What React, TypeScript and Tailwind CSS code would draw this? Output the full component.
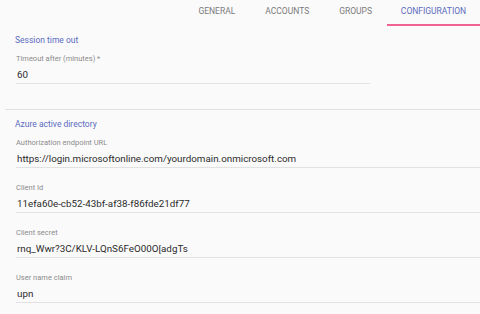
import React from "react";

const font = { fontFamily: "Roboto, 'Liberation Sans', sans-serif" };

function Field({ label, value, first, widthClass }: { label: string; value: string; first?: boolean; widthClass: string }) {
  return (
    <div className={`${first ? "mt-[8px]" : "mt-[15px]"} ${widthClass} ml-[1px] border-b border-[#e2e2e2]`}>
      <div className="h-[10px] text-[7.5px] leading-[10px] text-[#8c8c8c]">{label}</div>
      <div className="pt-[4px] pb-[1px] text-[9.8px] leading-[14px] text-[#2b2b2b] pl-[1px]">{value}</div>
    </div>
  );
}

export default function App() {
  const tabs = ["GENERAL", "ACCOUNTS", "GROUPS", "CONFIGURATION"];
  return (
    <div className="w-[480px] h-[314px] bg-[#fafafa] overflow-hidden" style={font}>
      <div className="h-[26px] flex justify-end">
        {tabs.map((t, i) => {
          const active = i === tabs.length - 1;
          return (
            <div
              key={t}
              className={`h-full flex justify-center pt-[5px] px-[15px] text-[8.5px] leading-[12px] ${
                active ? "text-[#5c6bc0] border-b-2 border-[#f06292] w-[93px]" : "text-[#7a7a7a]"
              }`}
            >
              <span>{t}</span>
            </div>
          );
        })}
      </div>
      <div className="pl-[15px]">
        <div className="mt-[8px] h-[12px] text-[8.5px] leading-[12px] text-[#5c6bc0]">Session time out</div>
        <Field first label="Timeout after (minutes) *" value="60" widthClass="w-[354px]" />
      </div>
      <div className="mt-[25px] ml-[5px] border-t border-[#e2e2e2]" />
      <div className="pl-[15px]">
        <div className="mt-[8px] h-[12px] text-[8.5px] leading-[12px] text-[#5c6bc0]">Azure active directory</div>
        <Field first label="Authorization endpoint URL" value="https://login.microsoftonline.com/yourdomain.onmicrosoft.com" widthClass="w-auto" />
        <Field label="Client Id" value="11efa60e-cb52-43bf-af38-f86fde21df77" widthClass="w-auto" />
        <Field label="Client secret" value="rnq_Wwr?3C/KLV-LQnS6FeO00O[adgTs" widthClass="w-auto" />
        <Field label="User name claim" value="upn" widthClass="w-auto" />
      </div>
    </div>
  );
}
